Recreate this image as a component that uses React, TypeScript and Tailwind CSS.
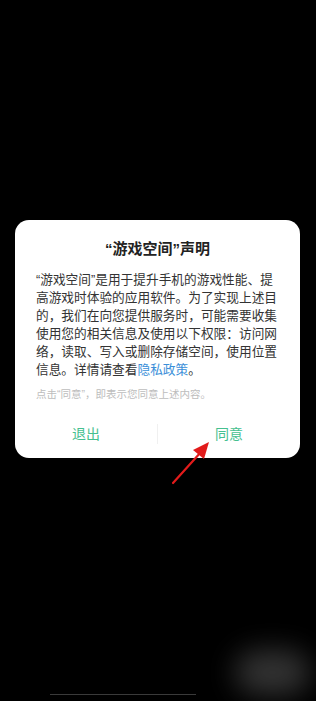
import React from 'react';

const font = { fontFamily: '"Liberation Sans", "Noto Sans CJK SC", sans-serif' };

const App: React.FC = () => {
    return (
        <div className="relative w-[316px] h-[701px] bg-black overflow-hidden" style={font}>
            <div className="pt-[220px] px-[15px]">
                <div className="bg-white rounded-[14px] w-[285px] h-[238px] flex flex-col">
                    <h1 className="text-center text-[15px] font-bold text-[#222] mt-[18px] leading-[22px]">“游戏空间”声明</h1>
                    <p className="px-[21px] mt-[11px] text-[12.7px] leading-[18px] text-[#333]">
                        “游戏空间”是用于提升手机的游戏性能、提高游戏时体验的应用软件。为了实现上述目的，我们在向您提供服务时，可能需要收集使用您的相关信息及使用以下权限：访问网络，读取、写入或删除存储空间，使用位置信息。详情请查看<span className="text-[#3b8fd9]">隐私政策</span>。
                    </p>
                    <p className="px-[21px] mt-[7px] text-[10.5px] leading-[16px] text-[#bdbdbd]">点击“同意”，即表示您同意上述内容。</p>
                    <div className="flex items-center mt-auto mb-[12px]">
                        <button className="flex-1 text-[14px] text-[#45c08f] h-[24px]">退出</button>
                        <div className="w-px h-[20px] bg-[#f0f0f0]" />
                        <button className="flex-1 text-[14px] text-[#45c08f] h-[24px]">同意</button>
                    </div>
                </div>
            </div>

            {/* red arrow pointing at the agree button */}
            <svg className="absolute left-[168px] top-[436px]" width="48" height="52" viewBox="0 0 48 52">
                <line x1="5" y1="47" x2="33" y2="16" stroke="#e21b1b" strokeWidth="2.2" strokeLinecap="round" />
                <polygon points="41,6 25,14 36,23" fill="#e21b1b" />
            </svg>

            {/* home indicator */}
            <div className="absolute left-[50px] top-[694px] w-[146px] h-px bg-[#3a3a3a]" />
            <div className="absolute left-[235px] top-[650px] w-[75px] h-[45px] rounded-full bg-[#555] blur-[14px] opacity-60" />
        </div>
    );
};

export default App;
